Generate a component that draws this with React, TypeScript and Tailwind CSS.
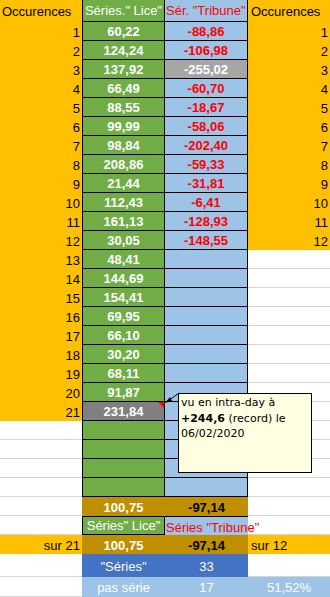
import React from 'react';

const lice = [
  '60,22', '124,24', '137,92', '66,49', '88,55', '99,99', '98,84', '208,86', '21,44', '112,43', '161,13',
  '30,05', '48,41', '144,69', '154,41', '69,95', '66,10', '30,20', '68,11', '91,87', '231,84',
];
const tribune = [
  '-88,86', '-106,98', '-255,02', '-60,70', '-18,67', '-58,06', '-202,40', '-59,33', '-31,81', '-6,41',
  '-128,93', '-148,55',
];

const font = "font-['Liberation_Sans',Arial,sans-serif] text-[13px]";

function DataRow({ i }: { i: number }) {
  const n = i + 1;
  const hasA = n <= 21;
  const hasD = n <= 12;
  const v = lice[i];
  const t = tribune[i];
  return (
    <div className="flex h-[19px]">
      {hasA ? (
        <div className="w-[82px] shrink-0 bg-[#ffc000] flex items-center justify-end pr-[2px] pt-[2px] text-black">
          {n}
        </div>
      ) : (
        <div className="w-[82px] shrink-0 bg-white border-b border-[#d4d4d4]" />
      )}
      <div
        className={
          'relative w-[83px] shrink-0 border-l border-r border-b border-black flex items-center justify-center pt-[2px] font-bold text-white ' +
          (n === 21 ? 'bg-[#808080]' : 'bg-[#70ad47]')
        }
      >
        {v}
        {n === 21 && (
          <span className="absolute top-0 right-0 w-0 h-0 border-solid border-t-[6px] border-l-[6px] border-t-[#ff0000] border-l-transparent" />
        )}
      </div>
      <div
        className={
          'w-[83px] shrink-0 border-r border-b border-black flex items-center justify-center pt-[2px] font-bold ' +
          (n === 3 ? 'bg-[#a6a6a6] text-white' : 'bg-[#9dc3e6] text-[#ff0000]')
        }
      >
        {t}
      </div>
      {hasD ? (
        <div className="w-[82px] shrink-0 bg-[#ffc000] flex items-center justify-end pr-[2px] pt-[2px] text-black">
          {n}
        </div>
      ) : (
        <div className="w-[82px] shrink-0 bg-white border-b border-[#d4d4d4]" />
      )}
    </div>
  );
}

export default function App() {
  return (
    <div className={'relative w-[330px] h-[597px] overflow-hidden bg-white ' + font}>
      {/* header */}
      <div className="flex h-[22px]">
        <div className="w-[82px] shrink-0 bg-[#ffc000] flex items-center pl-[2px] pt-[1px] text-black">Occurences</div>
        <div className="w-[83px] shrink-0 bg-[#70ad47] border-l border-r border-b border-black flex items-center justify-center pt-[1px] text-white whitespace-nowrap overflow-hidden">
          Séries." Lice"
        </div>
        <div className="w-[83px] shrink-0 bg-[#9dc3e6] border-r border-b border-black flex items-center pl-[1px] pt-[1px] text-[#ff0000] whitespace-nowrap overflow-hidden">
          Sér. "Tribune"
        </div>
        <div className="w-[82px] shrink-0 bg-[#ffc000] flex items-center pl-[3px] pt-[1px] text-black">Occurences</div>
      </div>

      {Array.from({ length: 25 }, (_, i) => (
        <DataRow key={i} i={i} />
      ))}

      {/* moyenne */}
      <div className="flex h-[19px]">
        <div className="w-[82px] shrink-0 border-b border-[#d4d4d4]" />
        <div className="w-[83px] shrink-0 bg-[#bf8f00] flex items-center justify-center pt-[2px] font-bold text-white">100,75</div>
        <div className="w-[83px] shrink-0 bg-[#bf8f00] flex items-center justify-center pt-[2px] font-bold text-black">-97,14</div>
        <div className="w-[82px] shrink-0 border-b border-[#d4d4d4]" />
      </div>

      {/* titres */}
      <div className="flex h-[19px]">
        <div className="w-[82px] shrink-0 border-b border-[#d4d4d4]" />
        <div className="w-[83px] shrink-0 bg-[#70ad47] border border-black flex items-center justify-center pt-[1px] text-white whitespace-nowrap">
          Séries" Lice"
        </div>
        <div className="relative w-[83px] shrink-0 bg-[#9dc3e6] border-t border-black">
          <span className="absolute left-[1px] top-[1px] text-[#ff0000] whitespace-nowrap">Séries "Tribune"</span>
        </div>
        <div className="w-[82px] shrink-0 border-b border-[#d4d4d4]" />
      </div>

      {/* sur 21 / sur 12 */}
      <div className="flex h-[19px]">
        <div className="w-[82px] shrink-0 bg-[#ffc000] flex items-center justify-end pr-[2px] pt-[2px] text-black">sur 21</div>
        <div className="w-[83px] shrink-0 bg-[#bf8f00] flex items-center justify-center pt-[2px] font-bold text-white">100,75</div>
        <div className="w-[83px] shrink-0 bg-[#bf8f00] flex items-center justify-center pt-[2px] font-bold text-black">-97,14</div>
        <div className="w-[82px] shrink-0 bg-[#ffc000] flex items-center pl-[3px] pt-[2px] text-black">sur 12</div>
      </div>

      {/* séries */}
      <div className="flex h-[23px]">
        <div className="w-[82px] shrink-0 border-b border-[#d4d4d4]" />
        <div className="w-[83px] shrink-0 bg-[#4472c4] flex items-center justify-center pt-[2px] text-white">"Séries"</div>
        <div className="w-[83px] shrink-0 bg-[#4472c4] flex items-center justify-center pt-[2px] text-white">33</div>
        <div className="w-[82px] shrink-0 border-b border-[#d4d4d4]" />
      </div>

      {/* pas série */}
      <div className="flex h-[20px]">
        <div className="w-[82px] shrink-0 border-b border-[#d4d4d4]" />
        <div className="w-[83px] shrink-0 bg-[#9dc3e6] flex items-center justify-center pt-[1px] text-white">pas série</div>
        <div className="w-[83px] shrink-0 bg-[#9dc3e6] flex items-center justify-center pt-[1px] text-white">17</div>
        <div className="w-[82px] shrink-0 bg-[#9dc3e6] flex items-center justify-center pt-[1px] text-white">51,52%</div>
      </div>

      {/* commentaire */}
      <svg className="absolute left-0 top-0 pointer-events-none" width="330" height="597">
        <line x1="168" y1="401" x2="179" y2="393" stroke="black" strokeWidth="1" />
        <polygon points="165,403 170,397 172,401" fill="black" />
      </svg>
      <div className="absolute left-[178px] top-[393px] w-[134px] h-[80px] bg-[#ffffe1] border border-black pl-[2px] pt-[1px] font-['DejaVu_Sans',sans-serif] text-[11px] leading-[15.5px] text-black">
        vu en intra-day à
        <br />
        <b>+244,6</b> (record) le
        <br />
        06/02/2020
      </div>
    </div>
  );
}
